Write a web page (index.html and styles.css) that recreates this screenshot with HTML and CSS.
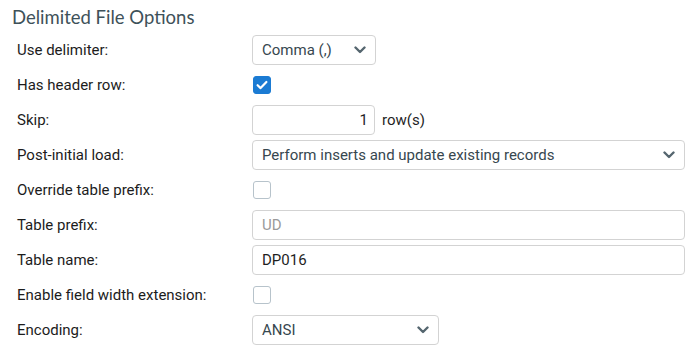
FILE: index.html
```html
<!DOCTYPE html>
<html>
<head>
<meta charset="utf-8">
<link rel="stylesheet" href="styles.css">
</head>
<body>
<div class="panel">
  <h2 class="title">Delimited File Options</h2>
  <div class="form">
    <div class="label">Use delimiter:</div>
    <div class="ctrl">
      <div class="select w-delim"><span>Comma (,)</span><svg class="chev" width="12" height="8" viewBox="0 0 12 8"><path d="M1.5 1.5 L6 6 L10.5 1.5" fill="none" stroke="#55666f" stroke-width="2.4" stroke-linecap="round" stroke-linejoin="round"/></svg></div>
    </div>

    <div class="label">Has header row:</div>
    <div class="ctrl">
      <div class="check checked"><svg width="18" height="18" viewBox="0 0 18 18"><path d="M4.6 9.2 L7.6 12.1 L13.4 6" fill="none" stroke="#fff" stroke-width="2.2" stroke-linecap="round" stroke-linejoin="round"/></svg></div>
    </div>

    <div class="label">Skip:</div>
    <div class="ctrl">
      <div class="input w-skip num">1</div><span class="unit">row(s)</span>
    </div>

    <div class="label">Post-initial load:</div>
    <div class="ctrl">
      <div class="select w-full"><span>Perform inserts and update existing records</span><svg class="chev" width="12" height="8" viewBox="0 0 12 8"><path d="M1.5 1.5 L6 6 L10.5 1.5" fill="none" stroke="#55666f" stroke-width="2.4" stroke-linecap="round" stroke-linejoin="round"/></svg></div>
    </div>

    <div class="label">Override table prefix:</div>
    <div class="ctrl"><div class="check"></div></div>

    <div class="label">Table prefix:</div>
    <div class="ctrl"><div class="input w-full placeholder">UD</div></div>

    <div class="label">Table name:</div>
    <div class="ctrl"><div class="input w-full value">DP016</div></div>

    <div class="label">Enable field width extension:</div>
    <div class="ctrl"><div class="check"></div></div>

    <div class="label">Encoding:</div>
    <div class="ctrl">
      <div class="select w-enc"><span>ANSI</span><svg class="chev" width="12" height="8" viewBox="0 0 12 8"><path d="M1.5 1.5 L6 6 L10.5 1.5" fill="none" stroke="#55666f" stroke-width="2.4" stroke-linecap="round" stroke-linejoin="round"/></svg></div>
    </div>
  </div>
</div>
</body>
</html>
```
FILE: styles.css
```css
html, body {
  margin: 0;
  padding: 0;
  background: #ffffff;
}
body {
  font-family: Roboto, "Liberation Sans", sans-serif;
  font-size: 15px;
  color: #1f1f1f;
}
.panel {
  width: 695px;
  height: 354px;
  box-sizing: border-box;
  padding: 0 10px 0 17px;
}
.title {
  margin: 0 0 0 -5px;
  padding-top: 5px;
  height: 35px;
  box-sizing: border-box;
  font-family: Lato, "Open Sans", sans-serif;
  font-weight: 400;
  font-size: 18.5px;
  line-height: 24px;
  color: #3e5159;
}
.form {
  display: grid;
  grid-template-columns: 235px 1fr;
  grid-auto-rows: 30px;
  row-gap: 5px;
}
.label {
  display: flex;
  align-items: center;
  color: #1c1c1c;
}
.ctrl {
  display: flex;
  align-items: center;
  gap: 7px;
}
.select, .input {
  height: 30px;
  box-sizing: border-box;
  border: 1px solid #d3d3d3;
  border-radius: 4px;
  display: flex;
  align-items: center;
  padding: 0 9px;
  color: #37474f;
  background: #fff;
}
.select {
  justify-content: space-between;
}
.w-delim { width: 124px; }
.w-skip { width: 123px; }
.w-full { width: 433px; }
.w-enc { width: 187px; }
.num {
  justify-content: flex-end;
  color: #1f1f1f;
  padding-right: 6px;
}
.unit {
  color: #1f1f1f;
}
.placeholder {
  color: #9a9a9a;
}
.value {
  color: #1f1f1f;
}
.chev {
  display: block;
}
.check {
  width: 18px;
  height: 18px;
  box-sizing: border-box;
  border: 1px solid #b7c3cb;
  border-radius: 3px;
  margin-left: 1px;
  background: #fff;
}
.check.checked {
  background: #1b7bd3;
  border-color: #1b7bd3;
}
.check svg {
  display: block;
  margin: -1px;
}
```
